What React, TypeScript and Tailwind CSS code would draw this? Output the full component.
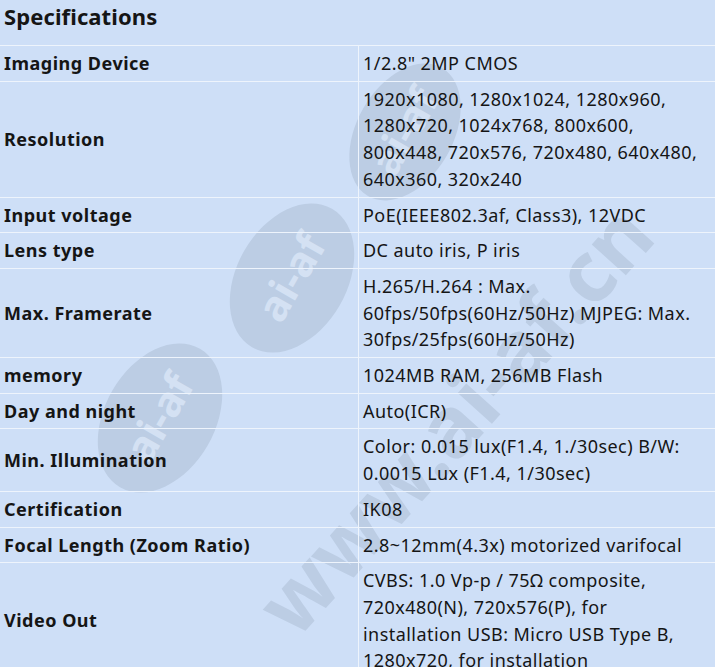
const specs: { label: string; value: string[] }[] = [
  { label: "Imaging Device", value: ['1/2.8" 2MP CMOS'] },
  {
    label: "Resolution",
    value: [
      "1920x1080, 1280x1024, 1280x960,",
      "1280x720, 1024x768, 800x600,",
      "800x448, 720x576, 720x480, 640x480,",
      "640x360, 320x240",
    ],
  },
  { label: "Input voltage", value: ["PoE(IEEE802.3af, Class3), 12VDC"] },
  { label: "Lens type", value: ["DC auto iris, P iris"] },
  {
    label: "Max. Framerate",
    value: ["H.265/H.264 : Max.", "60fps/50fps(60Hz/50Hz) MJPEG: Max.", "30fps/25fps(60Hz/50Hz)"],
  },
  { label: "memory", value: ["1024MB RAM, 256MB Flash"] },
  { label: "Day and night", value: ["Auto(ICR)"] },
  {
    label: "Min. Illumination",
    value: ["Color: 0.015 lux(F1.4, 1./30sec) B/W:", "0.0015 Lux (F1.4, 1/30sec)"],
  },
  { label: "Certification", value: ["IK08"] },
  { label: "Focal Length (Zoom Ratio)", value: ["2.8~12mm(4.3x) motorized varifocal"] },
  {
    label: "Video Out",
    value: [
      "CVBS: 1.0 Vp-p / 75Ω composite,",
      "720x480(N), 720x576(P), for",
      "installation USB: Micro USB Type B,",
      "1280x720, for installation",
    ],
  },
]

// site watermark, sits behind the table text
const Watermark = () => (
  <svg className="pointer-events-none absolute inset-0" width="715" height="667" viewBox="0 0 715 667">
    <g fill="#bccde4">
      <ellipse cx="160" cy="418" rx="80" ry="55" transform="rotate(-60 160 418)" />
      <ellipse cx="292" cy="278" rx="80" ry="55" transform="rotate(-60 292 278)" />
      <ellipse cx="405" cy="132" rx="74" ry="48" transform="rotate(-60 405 132)" />
    </g>
    <g fill="#d4e1f3" fontFamily="'Noto Sans', sans-serif" fontWeight="700" fontSize="42">
      <text x="160" y="432" textAnchor="middle" transform="rotate(-60 160 418)">ai-af</text>
      <text x="292" y="292" textAnchor="middle" transform="rotate(-60 292 278)">ai-af</text>
      <text x="405" y="146" textAnchor="middle" transform="rotate(-60 405 132)">ai-af</text>
    </g>
    <text
      x="455"
      y="450"
      textAnchor="middle"
      fill="#bccde4"
      fontFamily="'Noto Sans', sans-serif"
      fontWeight="700"
      fontSize="84"
      transform="rotate(-48 455 420)"
    >
      www.ai-af.cn
    </text>
  </svg>
)

const App = () => {
  return (
    <div className="relative w-[715px] h-[667px] overflow-hidden bg-[#cedff7] text-[#151515] font-['Noto_Sans',sans-serif]">
      <Watermark />
      <div className="relative">
        <div className="h-[46px] border-b border-[#eef4fc] px-1">
          <h2 className="text-[22px] font-bold leading-[32px] tracking-[0.1px]">Specifications</h2>
        </div>
        <div className="grid grid-cols-[359px_1fr]">
          {specs.map((row) => (
            <div key={row.label} className="contents">
              <div className="flex items-center border-b border-r border-[#eef4fc] px-1 text-[18px] font-bold leading-[26.7px] tracking-[0.5px]">
                {row.label}
              </div>
              <div className="border-b border-[#eef4fc] px-1 py-1 text-[18px] leading-[26.7px] tracking-[0.45px]">
                {row.value.map((line) => (
                  <p key={line} className="whitespace-nowrap">{line}</p>
                ))}
              </div>
            </div>
          ))}
        </div>
      </div>
    </div>
  )
}

export default App
